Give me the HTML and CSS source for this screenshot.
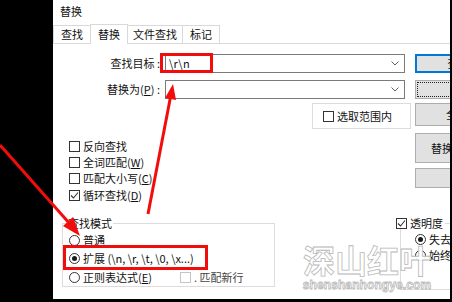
FILE: index.html
```html
<!DOCTYPE html>
<html lang="zh-CN">
<head>
    <meta charset="UTF-8">
    <meta name="viewport" content="width=device-width, initial-scale=1.0">
    <title>替换</title>
    <link rel="stylesheet" href="styles.css">
</head>
<body>

    <div class="screen">
        <div class="side"></div>
        <div class="dialog">
            <div class="titlebar">替换</div>

            <div class="tabs">
                <div class="tab">查找</div>
                <div class="tab active">替换</div>
                <div class="tab">文件查找</div>
                <div class="tab">标记</div>
            </div>

            <div class="panel">
                <div class="upper">
                    <div class="main">
                        <div class="field-row">
                            <label class="field-label">查找目标 :</label>
                            <div class="combo">
                                <span class="combo-text">\r\n</span>
                                <svg class="chevron" width="8" height="5" viewBox="0 0 8 5"><path d="M0.5 0.5 L4 4 L7.5 0.5" fill="none" stroke="#606060" stroke-width="1"/></svg>
                            </div>
                        </div>
                        <div class="field-row">
                            <label class="field-label">替换为(<u>P</u>) :</label>
                            <div class="combo">
                                <span class="combo-text"></span>
                                <svg class="chevron" width="8" height="5" viewBox="0 0 8 5"><path d="M0.5 0.5 L4 4 L7.5 0.5" fill="none" stroke="#606060" stroke-width="1"/></svg>
                            </div>
                        </div>

                        <div class="scope-box">
                            <span class="check"></span>选取范围内
                        </div>

                        <div class="options">
                            <div class="opt"><span class="check"></span>反向查找</div>
                            <div class="opt"><span class="check"></span>全词匹配(<u>W</u>)</div>
                            <div class="opt"><span class="check"></span>匹配大小写(<u>C</u>)</div>
                            <div class="opt"><span class="check on"><svg width="9" height="9" viewBox="0 0 9 9"><path d="M1 4.5 L3.5 7 L8 1.5" fill="none" stroke="#333" stroke-width="1.1"/></svg></span>循环查找(<u>D</u>)</div>
                        </div>
                    </div>

                    <div class="buttons">
                        <button class="btn btn-default">查找下一个</button>
                        <button class="btn btn-focus">替换(R)</button>
                        <button class="btn btn-mid">全部替换(A)</button>
                        <button class="btn btn-tall">替换所有打开文件</button>
                        <button class="btn btn-last">关闭</button>
                    </div>
                </div>

                <div class="lower">
                    <fieldset class="group mode">
                        <legend>查找模式</legend>
                        <div class="radio-row"><span class="radio"></span>普通</div>
                        <div class="radio-row"><span class="radio on"></span>扩展 (\n, \r, \t, \0, \x...)</div>
                        <div class="radio-row">
                            <span class="regex-label"><span class="radio"></span>正则表达式(<u>E</u>)</span>
                            <span class="newline"><span class="check off"></span>. 匹配新行</span>
                        </div>
                    </fieldset>

                    <fieldset class="group trans">
                        <legend><span class="check on"><svg width="9" height="9" viewBox="0 0 9 9"><path d="M1 4.5 L3.5 7 L8 1.5" fill="none" stroke="#333" stroke-width="1.1"/></svg></span>透明度</legend>
                        <div class="trans-row"><span class="radio on"></span>失去焦点后</div>
                        <div class="trans-row"><span class="radio"></span>始终</div>
                    </fieldset>
                </div>
            </div>
        </div>
    </div>

    <svg class="marks" width="452" height="302" viewBox="0 0 452 302">
        <rect x="161.5" y="54.5" width="50" height="17" fill="none" stroke="#f20d0d" stroke-width="3"/>
        <rect x="64.5" y="246.5" width="142" height="22" fill="none" stroke="#f20d0d" stroke-width="3"/>
        <line x1="148" y1="214" x2="170.5" y2="97" stroke="#f20d0d" stroke-width="3"/>
        <polygon points="173,84 176,100 165,98" fill="#f20d0d"/>
        <line x1="0" y1="145" x2="70" y2="224" stroke="#f20d0d" stroke-width="3"/>
        <polygon points="80,236 73,217 63,226" fill="#f20d0d"/>
    </svg>

    <div class="watermark">
        <div class="wm-big">深山红叶</div>
        <div class="wm-small">shenshanhongye.com</div>
    </div>

</body>
</html>
```

FILE: styles.css
```css
*, *::before, *::after {
    box-sizing: border-box;
    margin: 0;
    padding: 0;
}

body {
    width: 452px;
    height: 302px;
    overflow: hidden;
    position: relative;
    background: #000;
    font-family: "Noto Sans CJK SC", "Microsoft YaHei", sans-serif;
    font-size: 11px;
    line-height: 13px;
    color: #111;
}

.screen {
    display: flex;
    height: 299px;
}

.side {
    width: 53px;
    flex: none;
}

.dialog {
    width: 397px;
    flex: none;
    background: #fff;
    overflow: hidden;
}

.titlebar {
    height: 24px;
    padding: 5px 0 0 7px;
}

/* tab strip */
.tabs {
    display: flex;
    align-items: flex-end;
    height: 20px;
    border-bottom: 1px solid #d9d9d9;
}

.tab {
    height: 18px;
    min-width: 38px;
    padding: 2px 5px 0;
    text-align: center;
    border: 1px solid #d9d9d9;
    border-bottom: none;
    margin-right: -1px;
    background: #fff;
}

.active {
    height: 20px;
    margin-bottom: -1px;
    padding-top: 3px;
    position: relative;
}

/* upper part: fields and buttons */
.upper {
    display: flex;
}

.main {
    width: 362px;
    flex: none;
    padding-top: 10px;
}

.field-row {
    display: flex;
    align-items: center;
    height: 19px;
}

.field-row + .field-row {
    margin-top: 7px;
}

.field-label {
    width: 108px;
    text-align: right;
    padding-right: 1px;
}

.combo {
    margin-left: 4px;
    width: 240px;
    height: 19px;
    border: 1px solid #7a7a7a;
    display: flex;
    align-items: center;
    justify-content: space-between;
    padding: 0 5px 0 3px;
}

.combo-text {
    letter-spacing: 0.3px;
}

.scope-box {
    margin: 4px 0 0 259px;
    width: 99px;
    height: 26px;
    border: 1px solid #dcdcdc;
    display: flex;
    align-items: center;
    padding-left: 10px;
}

.options {
    margin-top: 9px;
    padding-left: 16px;
}

.opt {
    height: 16.3px;
    display: flex;
    align-items: center;
}

.check {
    width: 11px;
    height: 11px;
    border: 1px solid #333;
    background: #fff;
    flex: none;
    margin-right: 3px;
    display: inline-flex;
    align-items: center;
    justify-content: center;
}

.check.off {
    border-color: #c4c4c4;
}

.radio {
    width: 11px;
    height: 11px;
    border: 1px solid #333;
    border-radius: 50%;
    background: #fff;
    flex: none;
    margin-right: 3px;
    display: inline-flex;
    align-items: center;
    justify-content: center;
}

.radio.on::after {
    content: "";
    width: 5px;
    height: 5px;
    border-radius: 50%;
    background: #1a1a1a;
}

/* right hand button column */
.buttons {
    flex: none;
    width: 120px;
    padding-top: 10px;
    display: flex;
    flex-direction: column;
}

.btn {
    font: inherit;
    color: #111;
    background: #e1e1e1;
    border: 1px solid #adadad;
    height: 19px;
    white-space: nowrap;
    text-align: center;
}

.btn-default {
    border-color: #0078d7;
    box-shadow: inset 0 0 0 1px #0078d7;
}

.btn-focus {
    margin-top: 7px;
    outline: 1px dotted #222;
    outline-offset: -3px;
}

.btn-mid {
    margin-top: 4px;
    height: 23px;
}

.btn-tall {
    margin-top: 7px;
    height: 30px;
}

.btn-last {
    margin-top: 5px;
    height: 20px;
}

/* lower part: search mode + transparency */
.lower {
    display: flex;
    align-items: flex-start;
    margin-top: 14px;
}

.group {
    flex: none;
    border: 1px solid #dcdcdc;
}

.group legend {
    line-height: 12px;
    display: flex;
    align-items: center;
}

.mode {
    margin-left: 9px;
    width: 213px;
    height: 70px;
    padding: 0 6px;
}

.mode legend {
    padding: 0 1px;
    margin-left: -2px;
}

.radio-row {
    height: 18.5px;
    display: flex;
    align-items: center;
}

.radio-row:first-of-type {
    margin-top: 2px;
}

.regex-label {
    width: 111px;
    display: flex;
    align-items: center;
}

.newline {
    display: flex;
    align-items: center;
    color: #444;
}

.trans {
    margin-left: 125px;
    width: 100px;
    height: 73px;
    padding: 0 0 0 14px;
}

.trans legend {
    margin-left: -19px;
    padding-right: 2px;
}

.trans-row {
    height: 16px;
    display: flex;
    align-items: center;
    white-space: nowrap;
}

.trans-row:first-of-type {
    margin-top: 2px;
}

/* annotation layer */
.marks {
    position: absolute;
    left: 0;
    top: 0;
    pointer-events: none;
}

.watermark {
    position: absolute;
    left: 301px;
    top: 240px;
    width: 132px;
    text-align: center;
    color: rgba(255, 255, 255, 0.96);
    -webkit-text-stroke: 0.8px #b8b8b8;
}

.wm-big {
    font-size: 32px;
    line-height: 38px;
    font-weight: 700;
}

.wm-small {
    font-family: "Liberation Sans", Arial, sans-serif;
    font-size: 12px;
    line-height: 15px;
    font-weight: 700;
    letter-spacing: 0.1px;
}
```
